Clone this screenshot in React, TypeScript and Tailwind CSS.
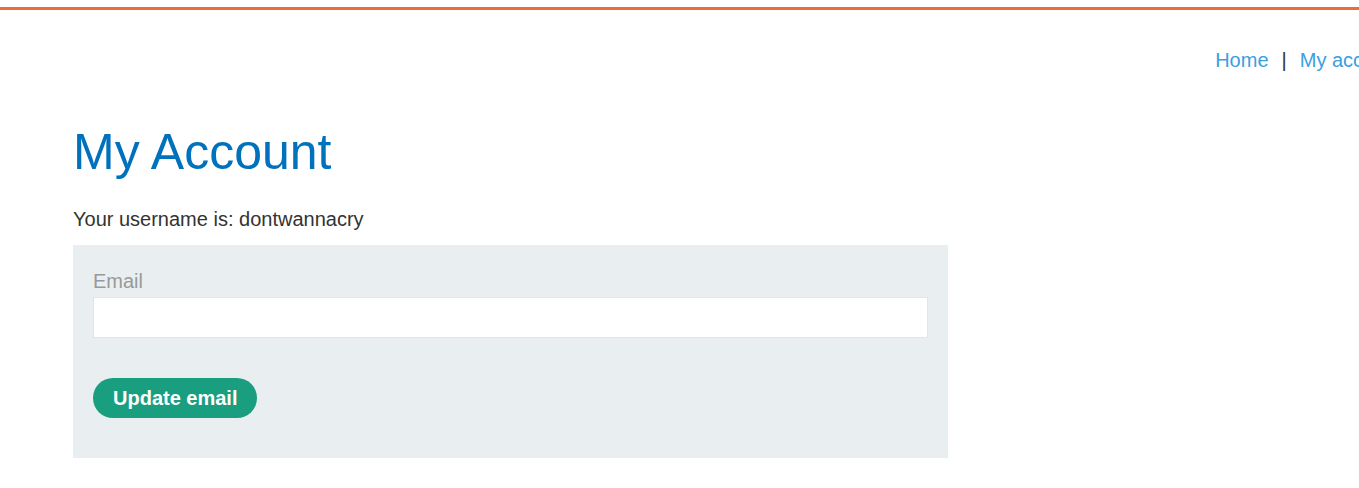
export default function App() {
  return (
    <div className="min-h-[488px] w-full overflow-hidden bg-white font-['Liberation_Sans',Arial,sans-serif] text-[#333332]">
      {/* lab banner stripe */}
      <div className="mt-[7px] h-[3px] bg-[#f26a3c]" />

      <header className="flex w-[1402px] justify-end pt-[38px] text-[20px] leading-[24px] whitespace-nowrap">
        <nav className="flex items-center">
          <a className="text-[#3aa0e0]">Home</a>
          <span className="mx-[13px]">|</span>
          <a className="text-[#3aa0e0]">My account</a>
        </nav>
      </header>

      <main className="px-[73px] pt-[50px]">
        <h1 className="text-[50px] leading-[60px] text-[#0071bc]">My Account</h1>
        <p className="mt-[25px] text-[20px] leading-[24px]">Your username is: dontwannacry</p>

        <form className="mt-[14px] flex w-[875px] flex-col bg-[#e9eef0] px-[20px] pt-[24px] pb-[40px]">
          <label className="text-[20px] leading-[24px] text-[#999]">Email</label>
          <input
            type="email"
            className="mt-[4px] h-[41px] w-full border border-[#e2e4e5] bg-white px-2 outline-none"
          />
          <div className="mt-[40px]">
            <button
              type="button"
              className="h-[40px] rounded-full bg-[#1a9e80] px-[20px] text-[20px] font-bold text-white"
            >
              Update email
            </button>
          </div>
        </form>
      </main>
    </div>
  );
}
